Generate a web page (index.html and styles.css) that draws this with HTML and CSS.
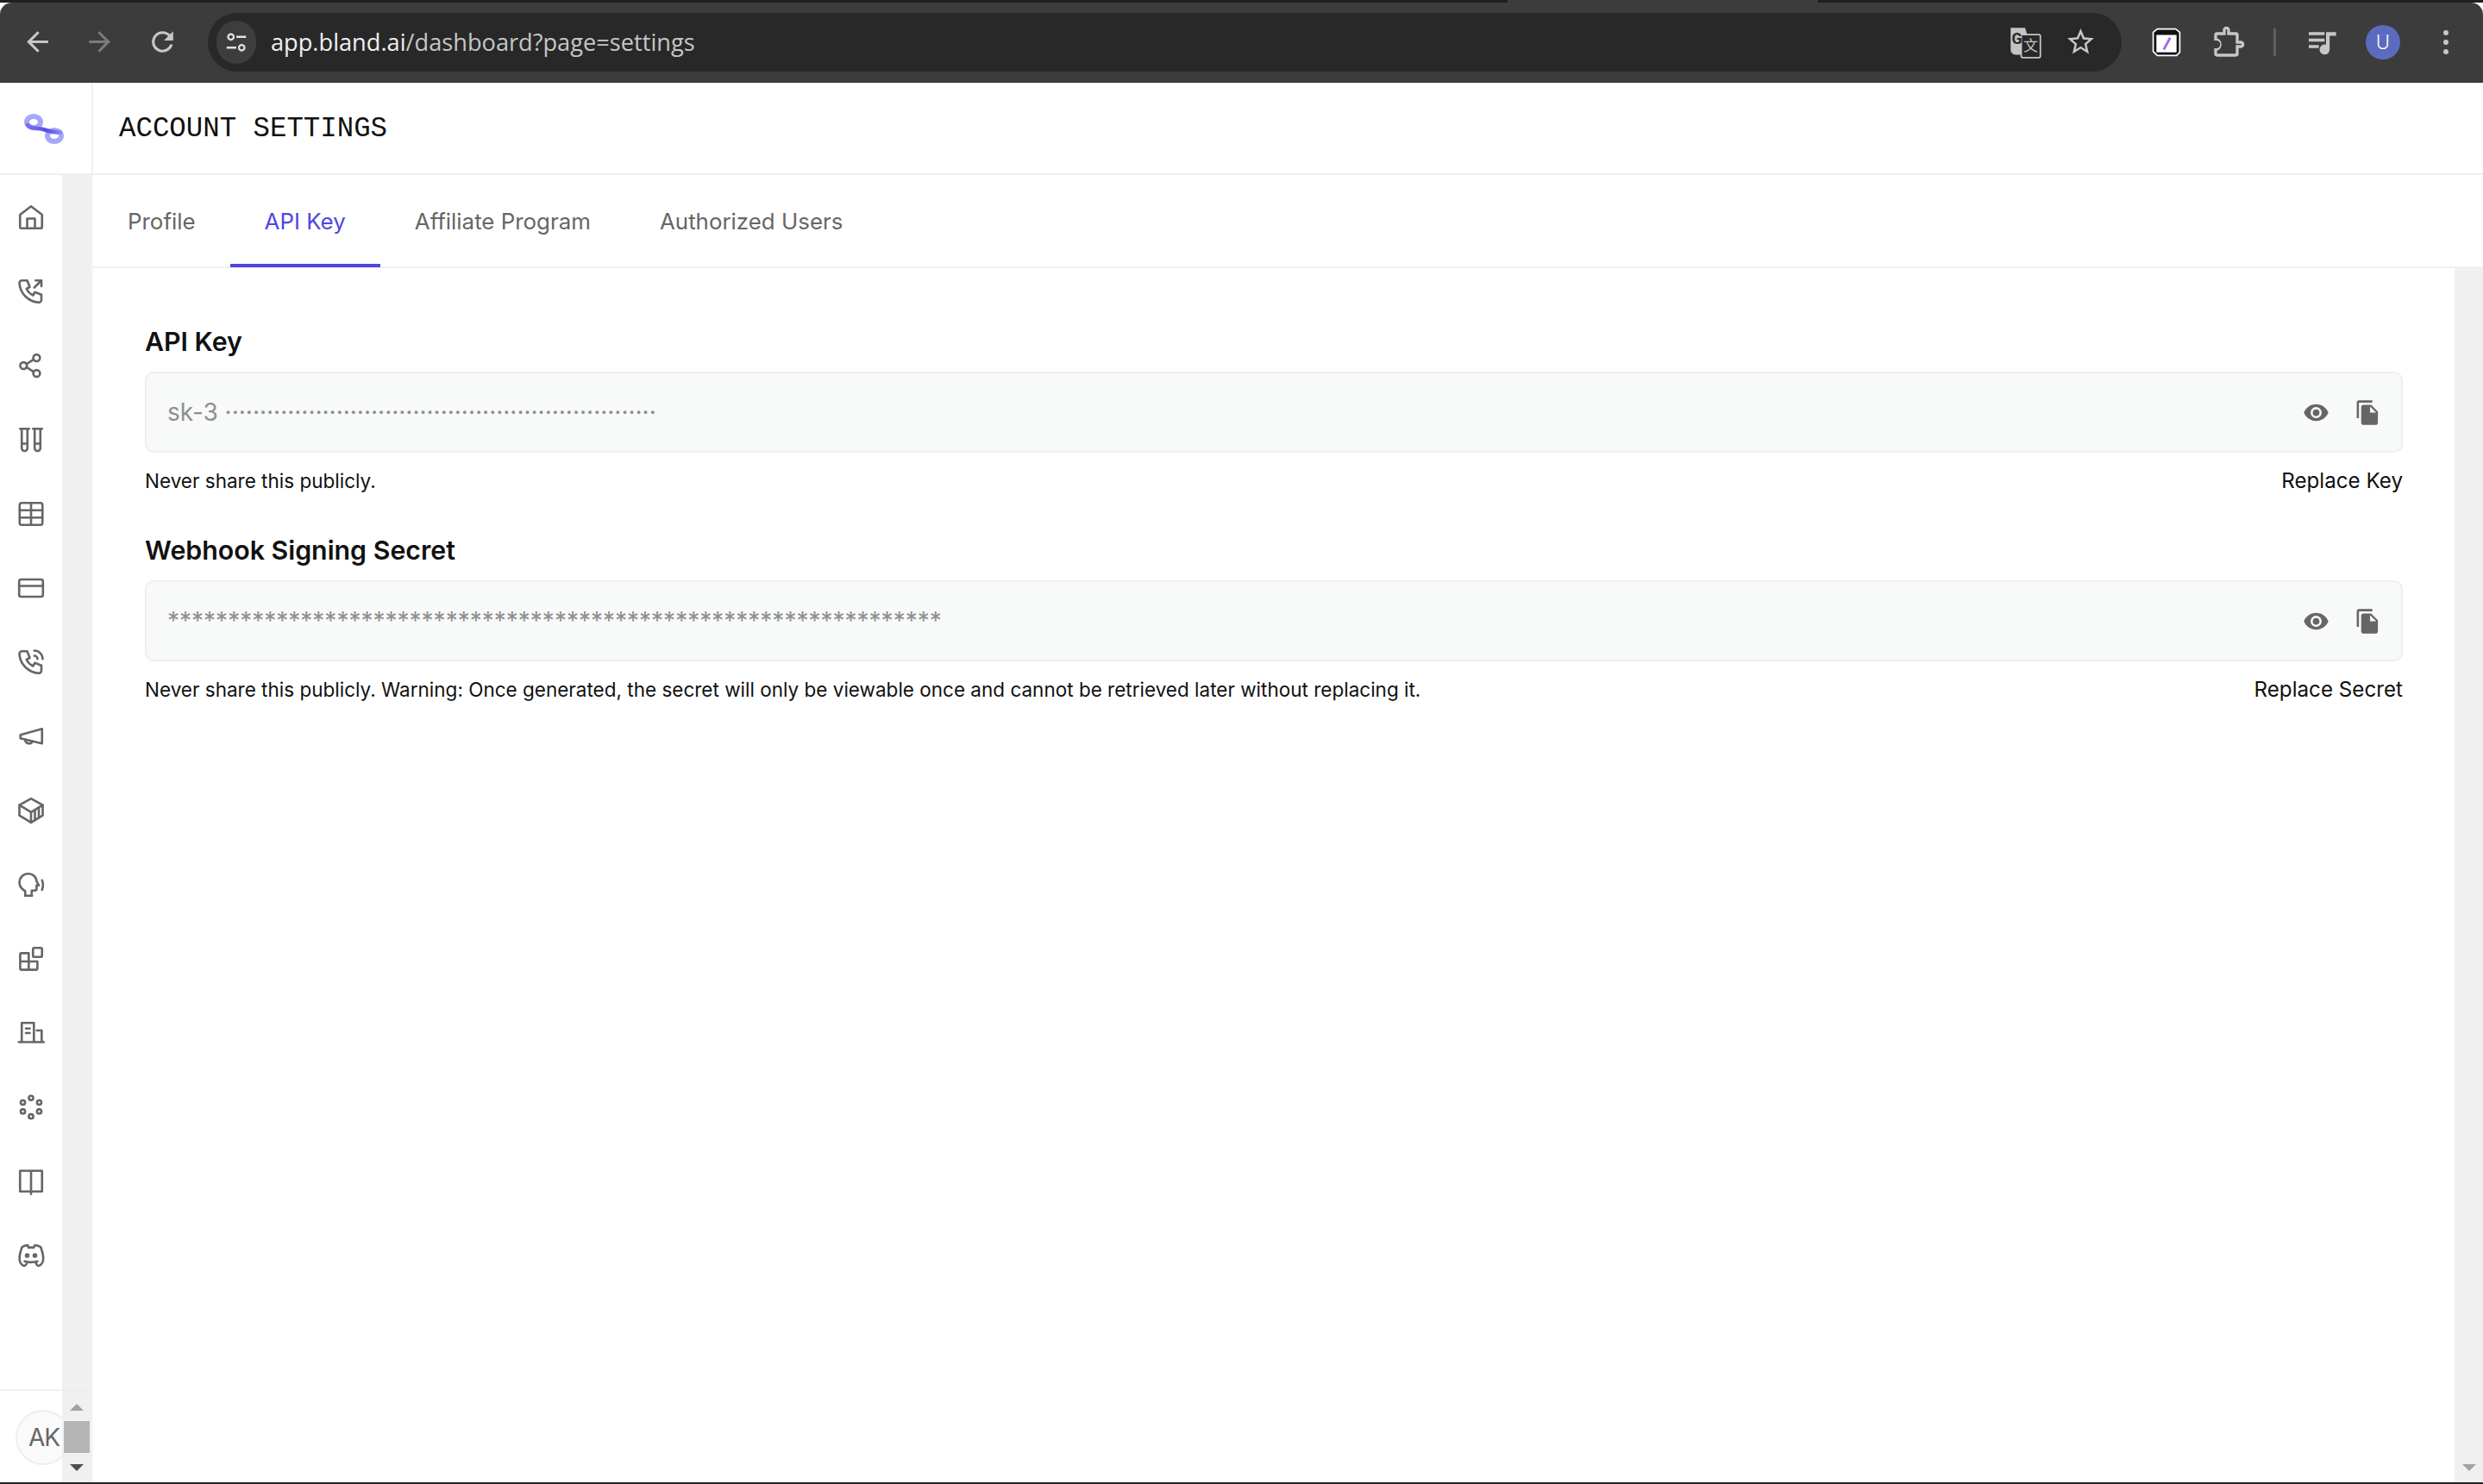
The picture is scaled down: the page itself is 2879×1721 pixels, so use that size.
FILE: index.html
```html
<!DOCTYPE html>
<html lang="en">
<head>
<meta charset="utf-8">
<title>Account Settings</title>
<link rel="stylesheet" href="styles.css">
</head>
<body>
<div class="window">
  <div class="strip"><span class="strip-tab"></span></div>
  <header class="toolbar">
    <button class="tb-btn back"><svg class="ci" viewBox="0 0 24 24"><path d="M20 11H7.830l5.590-5.590L12 4l-8 8 8 8 1.410-1.410L7.830 13H20v-2z"/></svg></button>
    <button class="tb-btn dim"><svg class="ci" viewBox="0 0 24 24"><path d="M12 4l-1.410 1.410L16.170 11H4v2h12.170l-5.580 5.590L12 20l8-8z"/></svg></button>
    <button class="tb-btn reload"><svg class="ci" viewBox="0 0 24 24"><path d="M17.650 6.350A7.960 7.960 0 0 0 12 4a8 8 0 1 0 7.730 10h-2.080A6 6 0 1 1 12 6c1.660 0 3.140.69 4.220 1.780L13 11h7V4l-2.350 2.350z"/></svg></button>
    <div class="omnibox">
      <span class="tune"><svg viewBox="0 0 24 24" class="tune-i"><circle cx="7" cy="7" r="2.600" fill="none" stroke="#e3e3e3" stroke-width="1.800"/><path d="M12 7h9M3 17h9" stroke="#e3e3e3" stroke-width="2"/><circle cx="17" cy="17" r="2.600" fill="none" stroke="#e3e3e3" stroke-width="1.800"/></svg></span>
      <span class="url"><span class="url-host">app.bland.ai</span>/dashboard?page=settings</span>
      <span class="translate"><svg viewBox="0 0 36 36" class="tr-i"><path d="M3 3h15l9 28H8a5 5 0 0 1-5-5z" fill="#c4c4c4"/><rect x="14" y="10" width="20" height="24" rx="1.500" fill="#282828" stroke="#c4c4c4" stroke-width="1.600"/><text x="9.500" y="20" class="tr-g">G</text><text x="24" y="27" class="tr-z">文</text></svg></span>
      <span class="star"><svg class="ci" viewBox="0 0 24 24"><path d="M22 9.240l-7.190-.62L12 2 9.190 8.630 2 9.240l5.460 4.730L5.820 21 12 17.270 18.180 21l-1.630-7.030L22 9.240zM12 15.400l-3.760 2.270 1-4.280-3.320-2.880 4.380-.38L12 6.100l1.710 4.040 4.380.38-3.320 2.880 1 4.280L12 15.400z"/></svg></span>
    </div>
    <span class="ext"><svg viewBox="0 0 32 32" class="ext-i"><path d="M1.500 5L6 1.500h20L30.500 5v22L27 30.500H6L1.500 26z" fill="#111" stroke="#fff" stroke-width="1.600"/><path d="M5 8h22v19H5z" fill="#fff"/><path d="M20 11l-7 13" stroke="#a66ee8" stroke-width="2.800"/></svg></span>
    <span class="ext puzzle"><svg class="ci big" viewBox="0 0 24 24"><path d="M20.500 11H19V7a2 2 0 0 0-2-2h-4V3.500a2.500 2.500 0 0 0-5 0V5H4a2 2 0 0 0-2 2v3.800h1.500a2.700 2.700 0 0 1 0 5.400H2V20a2 2 0 0 0 2 2h13a2 2 0 0 0 2-2v-4h1.500a2.500 2.500 0 0 0 0-5zM17 20H4v-2.100a4.700 4.700 0 0 0 0-8.800V7h6V3.500a.5.5 0 0 1 1 0V7h6v6h3.500a.5.5 0 0 1 0 1H17z"/></svg></span>
    <span class="sep"></span>
    <span class="ext play"><svg class="ci big" viewBox="0 0 24 24"><path d="M3 5h11v2H3zM3 9.500h11v2H3zM3 14h7v2H3zM15 5h7v2.500h-4.500V17a3.500 3.500 0 1 1-2.500-3.300z"/></svg></span>
    <span class="avatar-u">U</span>
    <span class="more"><i></i><i></i><i></i></span>
  </header>

  <div class="app">
    <aside class="sidebar">
      <div class="logo">
        <svg viewBox="0 0 48 36" class="logo-i">
          <defs><linearGradient id="lg" x1="0" y1="0" x2="1" y2="0"><stop offset="0" stop-color="#7471ef"/><stop offset=".6" stop-color="#5650e9"/><stop offset="1" stop-color="#8486f2"/></linearGradient></defs>
          <ellipse cx="12" cy="9.500" rx="8" ry="6.500" fill="none" stroke="#a6a8f5" stroke-width="6"/>
          <ellipse cx="36" cy="25.500" rx="8" ry="6.500" fill="none" stroke="#a6a8f5" stroke-width="6"/>
          <path d="M5 13C9 18.500 17 16 23 18s13 3.500 20 3.500" fill="none" stroke="url(#lg)" stroke-width="4.500" stroke-linecap="round"/>
        </svg>
      </div>
      <div class="side-body">
        <div class="side-col">
          <nav class="nav">
            <a class="nav-i"><svg viewBox="0 0 24 24"><path d="M3.500 19.500V10L12 3.500 20.500 10v9.500a1 1 0 0 1-1 1h-15a1 1 0 0 1-1-1z"/><path d="M9 20.500V13h6v7.500"/></svg></a>
            <a class="nav-i"><svg viewBox="0 .5 24 24"><path d="M5 4h4l2 5-2.500 1.500a11 11 0 0 0 5 5L15 13l5 2v4a2 2 0 0 1-2 2A16 16 0 0 1 3 6a2 2 0 0 1 2-2"/><path d="M14.500 9.500L20 4M15.500 4H20v4.500"/></svg></a>
            <a class="nav-i"><svg viewBox="0 0 24 24"><circle cx="6.200" cy="12" r="2.600"/><circle cx="16.300" cy="6" r="2.600"/><circle cx="16.300" cy="18" r="2.600"/><path d="M8.500 10.700l5.500-3.400M8.500 13.300l5.500 3.400"/></svg></a>
            <a class="nav-i"><svg viewBox="0 0 24 24"><path d="M3.500 3.500h7M4.800 3.500v15a2.200 2.200 0 0 0 4.400 0v-15M4.800 15h4.400M13.500 3.500h7M14.800 3.500v15a2.200 2.200 0 0 0 4.400 0v-15M14.800 15h4.400"/></svg></a>
            <a class="nav-i"><svg viewBox="0 0 24 24"><rect x="3.200" y="3.500" width="17.600" height="17" rx="1.500"/><path d="M3.200 9.200h17.600M3.200 14.800h17.600M12 3.500v17"/></svg></a>
            <a class="nav-i"><svg viewBox="0 0 24 24"><rect x="2.800" y="5.300" width="18.400" height="13.400" rx="1.500"/><path d="M2.800 10.300h18.400"/></svg></a>
            <a class="nav-i"><svg viewBox="0 .5 24 24"><path d="M5 4h4l2 5-2.500 1.500a11 11 0 0 0 5 5L15 13l5 2v4a2 2 0 0 1-2 2A16 16 0 0 1 3 6a2 2 0 0 1 2-2"/><path d="M14.500 7.500a2.500 2.500 0 0 1 2.500 2.500M14.500 3.500a6.500 6.500 0 0 1 6.500 6.500"/></svg></a>
            <a class="nav-i"><svg viewBox="0 0 24 24"><path d="M20.500 6.200v11.300L3.800 13.500v-2.700z"/><path d="M7.500 14.500a3 3 0 0 0 5.700 1.300"/></svg></a>
            <a class="nav-i"><svg viewBox="0 0 24 24"><path d="M12 2.800l9 5v8L12 21.200 3 15.800v-8z"/><path d="M3 7.800l9 5.500 9-5.500M12 13.300v7.900M15 11.500v8M18 9.700v8"/></svg></a>
            <a class="nav-i"><svg viewBox="0 0 24 24"><path d="M7.500 20.500V17C4.800 15.500 3 13 3 10.200 3 6.300 6.200 3.500 10 3.500c3.500 0 6 2.600 6.300 5.700l1.700 3.300h-1.700v2.500a1.500 1.500 0 0 1-1.500 1.500h-2.300v3.500"/><path d="M7.500 20.500h5.300M20.500 8.500c1 2.500 1 5 0 7.500"/></svg></a>
            <a class="nav-i"><svg viewBox="0 0 24 24"><rect x="13.500" y="3.500" width="7" height="7" rx="1"/><path d="M10.200 7.600H4.600a1 1 0 0 0-1 1v10.800a1 1 0 0 0 1 1h11.300a1 1 0 0 0 1-1V14H3.600M10.200 7.600v12.800M10.200 7.600V14h6.700"/></svg></a>
            <a class="nav-i"><svg viewBox="0 0 24 24"><path d="M2.500 19h19.400M4.800 19V4.200h9.400V19M16.500 10h3.700v9M8 8.500h3M8 12h3"/></svg></a>
            <a class="nav-i"><svg viewBox="0 0 24 24"><circle cx="12" cy="4.900" r="1.700"/><circle cx="18.300" cy="8.400" r="1.700"/><circle cx="18.300" cy="15.300" r="1.700"/><circle cx="12" cy="19.100" r="1.700"/><circle cx="5.700" cy="15.300" r="1.700"/><circle cx="5.700" cy="8.400" r="1.700"/></svg></a>
            <a class="nav-i"><svg viewBox="0 0 24 24"><path d="M3.500 3.800h17v16h-17zM12 3.800v18"/></svg></a>
            <a class="nav-i"><svg viewBox="0 0 24 24"><path d="M8 12a1 1 0 1 0 2 0 1 1 0 0 0-2 0M14 12a1 1 0 1 0 2 0 1 1 0 0 0-2 0M15.500 17c0 1 1.500 3 2 3 1.500 0 2.833-1.667 3.500-3 .667-1.667.5-5.833-1.500-11.500-1.457-1.015-3-1.340-4.500-1.500l-.972 1.923a11.913 11.913 0 0 0-4.053 0L9.500 4c-1.500.16-3.043.485-4.500 1.500-2 5.667-2.167 9.833-1.500 11.500.667 1.333 2 3 3.500 3 .5 0 2-2 2-3M7 16.500c3.500 1 6.500 1 10 0"/></svg></a>
          </nav>
          <div class="user"><span class="user-av">AK</span></div>
        </div>
        <div class="track">
          <span class="track-top"></span>
          <span class="arr up"></span>
          <span class="thumb"></span>
          <span class="arr down"></span>
        </div>
      </div>
    </aside>

    <main class="main">
      <div class="title-bar"><h1 class="title">ACCOUNT SETTINGS</h1></div>
      <div class="tabs">
        <a class="tab">Profile</a>
        <a class="tab active">API Key</a>
        <a class="tab">Affiliate Program</a>
        <a class="tab">Authorized Users</a>
      </div>
      <div class="body">
        <div class="content">
          <section class="sec">
            <h2 class="sec-title">API Key</h2>
            <div class="field">
              <span class="value">sk-3 ······························································</span>
              <span class="acts">
                <svg class="act" viewBox="0 0 24 24"><path d="M12 9a3 3 0 1 0 0 6 3 3 0 0 0 0-6m0 8a5 5 0 1 1 0-10 5 5 0 0 1 0 10m0-12.500C7 4.500 2.730 7.610 1 12c1.730 4.390 6 7.500 11 7.500s9.270-3.110 11-7.500c-1.730-4.390-6-7.500-11-7.500z"/></svg>
                <svg class="act" viewBox="0 0 24 24"><path d="M16 1H4c-1.100 0-2 .9-2 2v14h2V3h12V1zm-1 4 6 6v10c0 1.100-.9 2-2 2H7.990C6.890 23 6 22.100 6 21l.01-14c0-1.100.89-2 1.990-2h7zm-1 7h5.500L14 6.500V12z"/></svg>
              </span>
            </div>
            <div class="hint-row"><span>Never share this publicly.</span><a class="replace">Replace Key</a></div>
          </section>
          <section class="sec">
            <h2 class="sec-title">Webhook Signing Secret</h2>
            <div class="field">
              <span class="value">****************************************************************</span>
              <span class="acts">
                <svg class="act" viewBox="0 0 24 24"><path d="M12 9a3 3 0 1 0 0 6 3 3 0 0 0 0-6m0 8a5 5 0 1 1 0-10 5 5 0 0 1 0 10m0-12.500C7 4.500 2.730 7.610 1 12c1.730 4.390 6 7.500 11 7.500s9.270-3.110 11-7.500c-1.730-4.390-6-7.500-11-7.500z"/></svg>
                <svg class="act" viewBox="0 0 24 24"><path d="M16 1H4c-1.100 0-2 .9-2 2v14h2V3h12V1zm-1 4 6 6v10c0 1.100-.9 2-2 2H7.990C6.890 23 6 22.100 6 21l.01-14c0-1.100.89-2 1.990-2h7zm-1 7h5.500L14 6.500V12z"/></svg>
              </span>
            </div>
            <div class="hint-row"><span>Never share this publicly. Warning: Once generated, the secret will only be viewable once and cannot be retrieved later without replacing it.</span><a class="replace">Replace Secret</a></div>
          </section>
        </div>
        <div class="page-scroll"><span class="arr down light"></span></div>
      </div>
    </main>
  </div>
  <div class="base-line"></div>
</div>
</body>
</html>
```

FILE: styles.css
```css
* { box-sizing: border-box; }
html, body { margin: 0; padding: 0; height: 100%; overflow: hidden; background: #fff; }
body { font-family: "Inter", "Liberation Sans", sans-serif; color: #111; }
.window { display: flex; flex-direction: column; height: 1721px; width: 2879px; }

.strip { height: 3px; background: #1f1f1f; display: flex; flex: none; }
.strip-tab { width: 360px; margin-left: 1748px; background: #3c3c3c; }
.toolbar { height: 93px; flex: none; background: #3c3c3c; border-radius: 14px 14px 0 0; display: flex; align-items: center; padding: 0 0 2px 10px; }
.tb-btn { width: 70px; height: 48px; background: none; border: 0; padding: 0; display: flex; align-items: center; justify-content: center; }
.tb-btn.back { margin-left: -2px; margin-right: 2px; }
.tb-btn.reload { margin-left: 3px; }
.ci { width: 37px; height: 37px; fill: #c7c7c7; display: block; }
.ci.big { width: 40px; height: 40px; }
.dim .ci { fill: #7b7b7b; }

.omnibox { width: 2219px; margin-left: 18px; height: 68px; border-radius: 34px; background: #282828; display: flex; align-items: center; padding-left: 10px; padding-right: 24px; }
.tune { width: 46px; height: 50px; border-radius: 25px; background: #3d3d3d; display: flex; align-items: center; justify-content: center; flex: none; }
.tune-i { width: 30px; height: 30px; }
.url { margin-left: 17px; font-family: "Open Sans", "Noto Sans", sans-serif; font-size: 27.200px; color: #c4c7c5; white-space: nowrap; }
.url-host { color: #f1f1f1; }
.translate { margin-left: auto; width: 40px; height: 40px; margin-right: 20px; }
.tr-i { width: 40px; height: 40px; display: block; }
.tr-g { font: 700 16px "Roboto", sans-serif; fill: #282828; text-anchor: middle; }
.tr-z { font: 400 15px "Noto Sans CJK SC", sans-serif; fill: #c4c4c4; text-anchor: middle; }
.star { width: 48px; display: flex; justify-content: center; }

.ext { width: 40px; height: 40px; display: flex; align-items: center; justify-content: center; margin-left: 32px; flex: none; }
.ext-i { width: 34px; height: 34px; }
.sep { width: 3px; height: 32px; background: #5f5f5f; margin-left: 32px; flex: none; }
.ext.play { margin-left: 33px; }
.avatar-u { width: 40px; height: 40px; border-radius: 50%; background: #5c6bc0; color: #fff; margin-left: 31px; display: flex; align-items: center; justify-content: center; font-size: 24px; font-weight: 300; flex: none; font-family: "Roboto", sans-serif; }
.more { margin-left: 33px; width: 40px; display: flex; flex-direction: column; align-items: center; gap: 5px; flex: none; }
.more i { width: 6px; height: 6px; border-radius: 50%; background: #c7c7c7; display: block; }

.app { flex: 1; display: flex; min-height: 0; background: #fff; }
.sidebar { width: 108px; flex: none; display: flex; flex-direction: column; }
.logo { height: 107px; flex: none; border-right: 2px solid #efefef; border-bottom: 2px solid #efefef; display: flex; align-items: center; padding: 2px 0 0 27px; }
.logo-i { width: 48px; height: 36px; }
.side-body { flex: 1; display: flex; min-height: 0; }
.side-col { width: 72px; flex: none; display: flex; flex-direction: column; }
.nav { flex: 1; display: flex; flex-direction: column; align-items: center; gap: 50px; padding-top: 31px; }
.nav-i { width: 36px; height: 36px; display: block; }
.nav-i svg { width: 36px; height: 36px; display: block; fill: none; stroke: #666; stroke-width: 1.750; stroke-linecap: round; stroke-linejoin: round; }
.user { height: 108px; flex: none; border-top: 2px solid #f0f0f0; padding: 22px 0 0 18px; overflow: hidden; }
.user-av { width: 64px; height: 64px; border-radius: 50%; background: #fafafa; border: 2px solid #eeeeee; color: #666; font-size: 28px; letter-spacing: -1px; display: flex; align-items: center; justify-content: flex-start; padding-left: 13px; }
.track { width: 36px; flex: none; background: #f0f0f0; border-right: 2px solid #f6f6f6; display: flex; flex-direction: column; align-items: center; }
.track-top { flex: 1; align-self: stretch; border-bottom: 1px solid #e8e8e8; }
.arr { width: 0; height: 0; border-left: 8px solid transparent; border-right: 8px solid transparent; display: block; }
.arr.up { border-bottom: 8px solid #a3a3a3; margin-top: 15px; }
.arr.down { border-top: 8px solid #505050; margin-top: 13px; margin-bottom: 13px; }
.thumb { width: 30px; height: 37px; background: #b5b5b5; margin-top: 12px; }

.main { flex: 1; min-width: 0; display: flex; flex-direction: column; }
.title-bar { height: 107px; flex: none; border-bottom: 2px solid #efefef; display: flex; align-items: center; padding: 2px 0 0 30px; }
.title { margin: 0; font-family: "Liberation Mono", monospace; font-weight: 400; font-size: 32.400px; color: #111; white-space: nowrap; }
.tabs { height: 108px; flex: none; border-bottom: 2px solid #efefef; display: flex; }
.tab { height: 107px; padding: 0 40px 1px; display: flex; align-items: center; font-size: 25.900px; color: #666; white-space: nowrap; }
.tab.active { color: #4f46e5; border-bottom: 4px solid #4f46e5; padding-top: 3px; padding-bottom: 0; }
.body { flex: 1; display: flex; min-height: 0; }
.content { flex: 1; min-width: 0; padding: 66px 60px 0 60px; display: flex; flex-direction: column; gap: 46px; }
.sec { display: flex; flex-direction: column; }
.sec-title { margin: 0 0 14px; height: 40px; line-height: 38px; font-size: 30.300px; font-weight: 600; color: #111; }
.field { height: 94px; border: 2px solid #efefef; border-radius: 10px; background: #f8f9f9; display: flex; align-items: center; padding: 0 23px 0 24px; }
.value { font-size: 28px; color: #8f8f8f; white-space: nowrap; }
.acts { margin-left: auto; display: flex; gap: 29px; }
.act { width: 31px; height: 31px; fill: #666; display: block; }
.hint-row { margin-top: 16px; height: 32px; display: flex; justify-content: space-between; align-items: center; font-size: 22.500px; color: #111; }
.replace { color: #111; font-size: 24.200px; }
.page-scroll { width: 33px; flex: none; background: #f0f0f0; display: flex; flex-direction: column; align-items: center; justify-content: flex-end; }
.arr.down.light { border-top-color: #a3a3a3; }
.base-line { height: 2px; flex: none; background: #222; }
```
